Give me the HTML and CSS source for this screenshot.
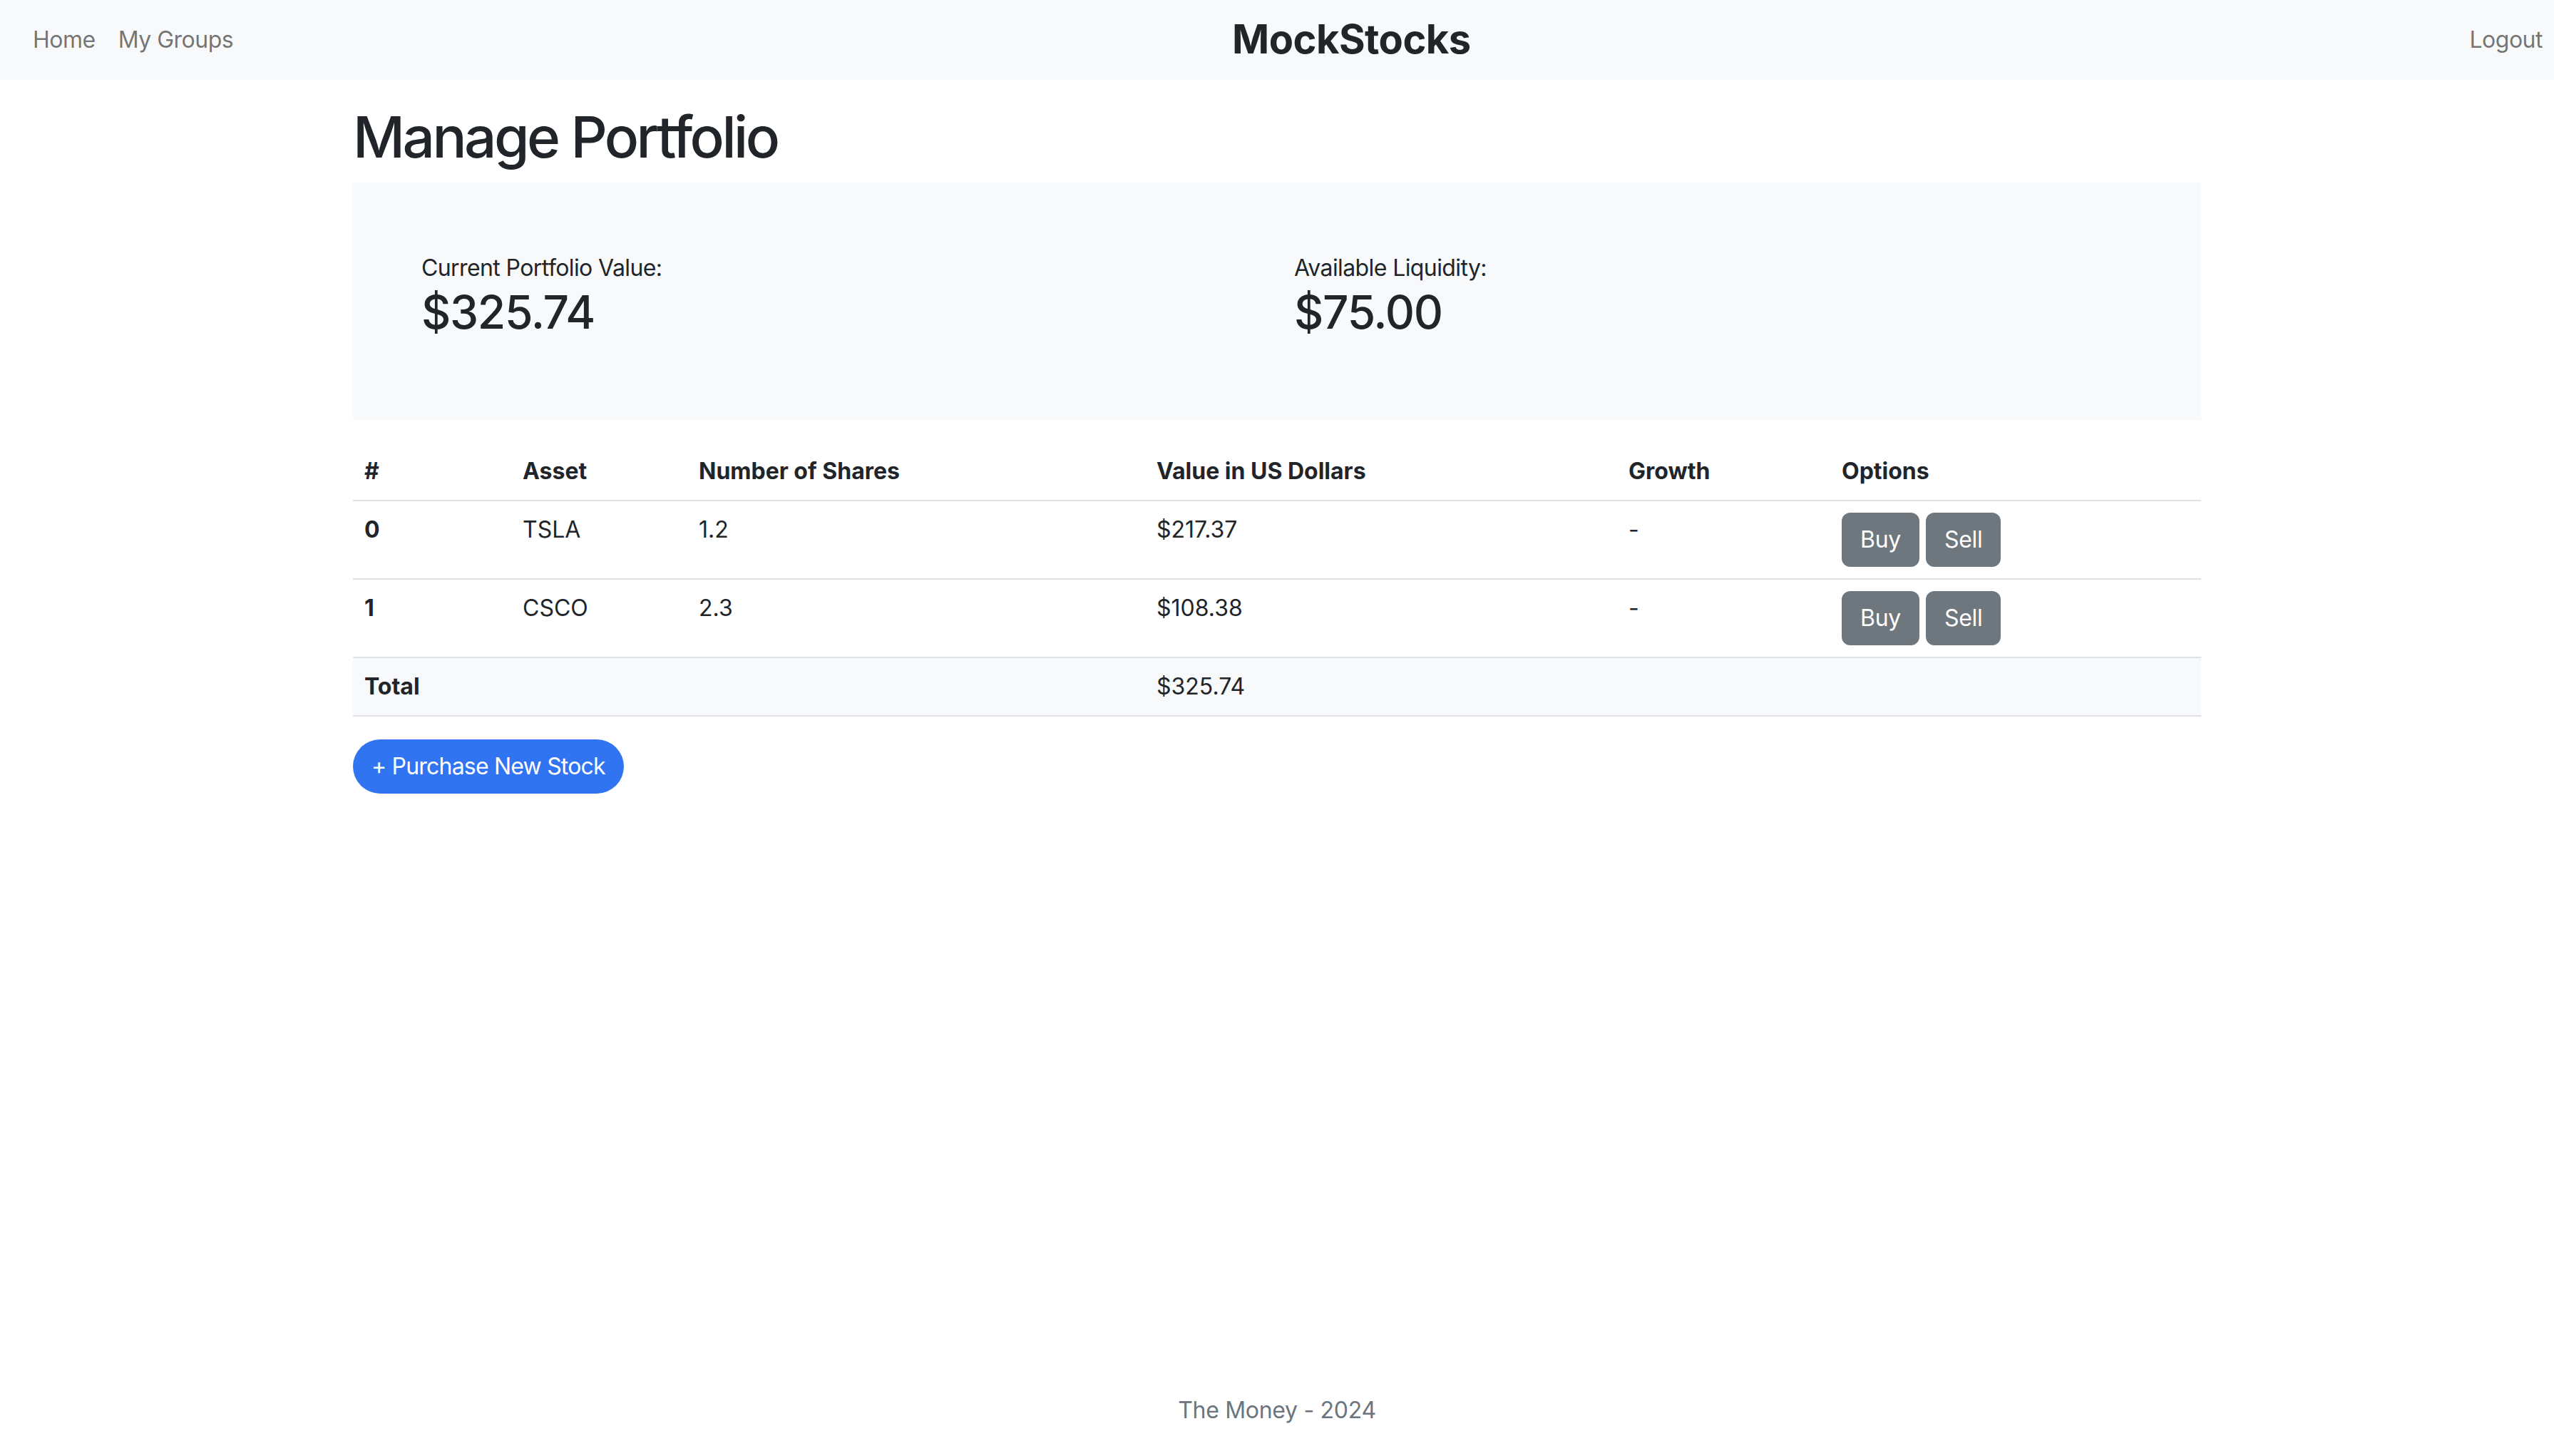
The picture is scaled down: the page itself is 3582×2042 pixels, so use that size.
FILE: index.html
```html
<!DOCTYPE html>
<html lang="en">
<head>
<meta charset="utf-8">
<title>MockStocks - Manage Portfolio</title>
<link rel="stylesheet" href="styles.css">
</head>
<body>
<nav class="navbar">
  <ul class="nav-list">
    <li><a class="nav-link" href="#">Home</a></li>
    <li><a class="nav-link" href="#">My Groups</a></li>
  </ul>
  <a class="brand" href="#">MockStocks</a>
  <ul class="nav-list">
    <li><a class="nav-link" href="#">Logout</a></li>
  </ul>
</nav>

<main class="container">
  <h1 class="page-title">Manage Portfolio</h1>

  <section class="summary">
    <div class="summary-item">
      <div class="summary-label">Current Portfolio Value:</div>
      <h2 class="summary-value">$325.74</h2>
    </div>
    <div class="summary-item">
      <div class="summary-label">Available Liquidity:</div>
      <h2 class="summary-value">$75.00</h2>
    </div>
  </section>

  <table class="portfolio">
    <colgroup>
      <col class="c-idx">
      <col class="c-asset">
      <col class="c-shares">
      <col class="c-value">
      <col class="c-growth">
      <col class="c-options">
    </colgroup>
    <thead>
      <tr>
        <th>#</th>
        <th>Asset</th>
        <th>Number of Shares</th>
        <th>Value in US Dollars</th>
        <th>Growth</th>
        <th>Options</th>
      </tr>
    </thead>
    <tbody>
      <tr>
        <th>0</th>
        <td>TSLA</td>
        <td>1.2</td>
        <td>$217.37</td>
        <td>-</td>
        <td><button class="btn btn-gray">Buy</button> <button class="btn btn-gray">Sell</button></td>
      </tr>
      <tr>
        <th>1</th>
        <td>CSCO</td>
        <td>2.3</td>
        <td>$108.38</td>
        <td>-</td>
        <td><button class="btn btn-gray">Buy</button> <button class="btn btn-gray">Sell</button></td>
      </tr>
      <tr class="total-row">
        <th>Total</th>
        <td></td>
        <td></td>
        <td>$325.74</td>
        <td></td>
        <td></td>
      </tr>
    </tbody>
  </table>

  <button class="btn btn-primary btn-pill">+ Purchase New Stock</button>
</main>

<footer class="footer">The Money - 2024</footer>
</body>
</html>
```

FILE: styles.css
```css
* {
  box-sizing: border-box;
}

html, body {
  margin: 0;
  padding: 0;
}

body {
  font-family: Inter, "Noto Sans", "Liberation Sans", sans-serif;
  font-size: 32px;
  line-height: 1.5;
  color: #212529;
  background: #ffffff;
  min-height: 100vh;
  display: flex;
  flex-direction: column;
}

/* Navbar */
.navbar {
  height: 112px;
  background: #f8f9fa;
  display: flex;
  align-items: center;
  padding: 0 0 0 30px;
}

.nav-list {
  list-style: none;
  margin: 0;
  padding: 0;
  display: flex;
}

.nav-link {
  display: block;
  padding: 0 16px;
  color: rgba(0, 0, 0, 0.55);
  text-decoration: none;
  font-size: 32px;
  line-height: 48px;
  letter-spacing: -0.5px;
}

.brand {
  margin: 0 auto;
  font-size: 56px;
  line-height: 1.2;
  font-weight: 700;
  letter-spacing: -0.5px;
  color: #212529;
  text-decoration: none;
}

/* Main */
.container {
  flex: 1;
  width: 100%;
  max-width: 2640px;
  margin: 0 auto;
  padding: 0 24px;
}

.page-title {
  margin: 32px 0 16px;
  font-size: 80px;
  line-height: 96px;
  font-weight: 500;
  letter-spacing: -3.5px;
}

.summary {
  background: #f8f9fa;
  padding: 96px;
  display: grid;
  grid-template-columns: 1fr 1fr;
  column-gap: 48px;
}

.summary-label {
  font-size: 32px;
  line-height: 48px;
  letter-spacing: -0.6px;
}

.summary-value {
  margin: 0 0 16px;
  font-size: 64px;
  line-height: 1.2;
  font-weight: 500;
  letter-spacing: -1.3px;
}

/* Table */
.portfolio {
  width: 100%;
  margin: 32px 0 32px;
  border-collapse: collapse;
  table-layout: fixed;
}

.c-idx { width: 222px; }
.c-asset { width: 247px; }
.c-shares { width: 642px; }
.c-value { width: 662px; }
.c-growth { width: 299px; }
.c-options { width: 520px; }

.portfolio th,
.portfolio td {
  padding: 16px;
  text-align: left;
  vertical-align: top;
  border-bottom: 2px solid #dee2e6;
  line-height: 48px;
}

.portfolio th {
  font-weight: 700;
}

.total-row th,
.total-row td {
  background: #f8f9fa;
}

/* Buttons */
.btn {
  display: inline-block;
  font-family: inherit;
  font-size: 32px;
  line-height: 48px;
  padding: 12px 24px;
  border: 2px solid transparent;
  border-radius: 12px;
  color: #ffffff;
  cursor: pointer;
  vertical-align: middle;
  letter-spacing: -0.3px;
}

.btn-gray {
  background: #6e767e;
}

.btn-primary {
  background: #3174f1;
  letter-spacing: -0.8px;
}

.btn-pill {
  border-radius: 999px;
}

/* Footer */
.footer {
  text-align: center;
  color: #6c757d;
  padding: 32px 0 40px;
  font-size: 32px;
  line-height: 48px;
  letter-spacing: -0.3px;
}
```
